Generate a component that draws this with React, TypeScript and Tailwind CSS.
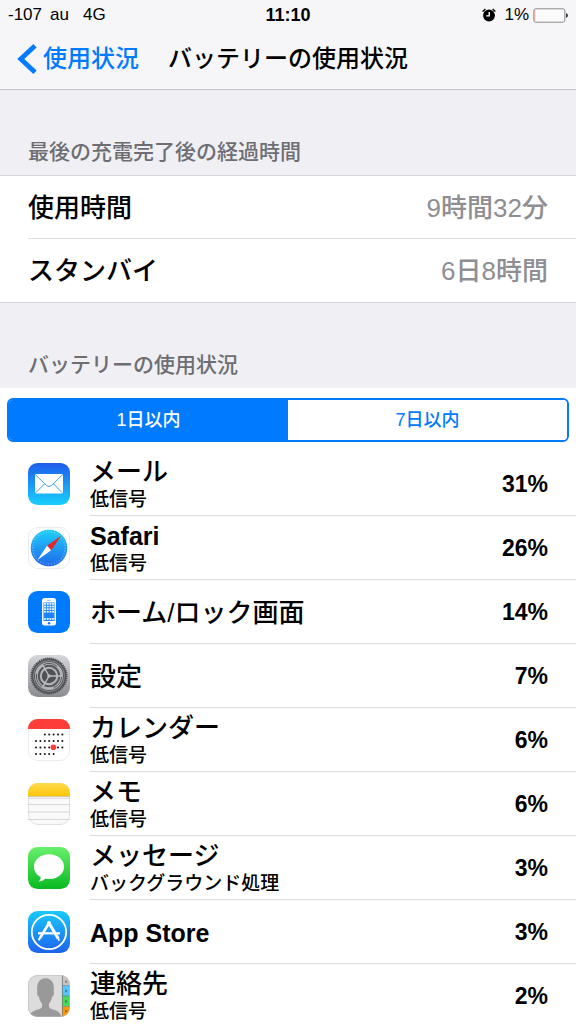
import { useState } from "react";
import type { ReactNode } from "react";

interface UsageTime {
  label: string;
  value: string;
}

interface AppUsage {
  name: string;
  latin?: boolean;
  note?: string;
  percent: number;
  icon: ReactNode;
}

const MailIcon = () => (
  <svg viewBox="0 0 42 42" className="size-full" aria-hidden="true">
    <defs>
      <linearGradient id="mail" x1="0" y1="0" x2="0" y2="1">
        <stop offset="0" stopColor="#1e5cec" />
        <stop offset="1" stopColor="#19d0fd" />
      </linearGradient>
    </defs>
    <rect width="42" height="42" rx="9.5" fill="url(#mail)" />
    <rect x="7" y="11" width="28" height="19.5" rx="1.5" fill="#fff" />
    <path
      d="M7.8 12 18.5 22.5Q21 24.6 23.5 22.5L34.2 12M7.8 29.6 16.6 20.8M34.2 29.6 25.4 20.8"
      fill="none"
      stroke="#3d9fe8"
      strokeWidth="1"
    />
  </svg>
);

const SafariIcon = () => (
  <svg viewBox="0 0 42 42" className="size-full" aria-hidden="true">
    <defs>
      <linearGradient id="safari" x1="0" y1="0" x2="0" y2="1">
        <stop offset="0" stopColor="#1fcffb" />
        <stop offset="1" stopColor="#1f68ea" />
      </linearGradient>
    </defs>
    <rect x=".5" y=".5" width="41" height="41" rx="9.5" fill="#fff" stroke="#ececec" />
    <circle cx="21" cy="21" r="18.3" fill="url(#safari)" />
    <circle
      cx="21"
      cy="21"
      r="16.2"
      fill="none"
      stroke="#c4ecff"
      strokeOpacity=".6"
      strokeWidth="1.8"
      strokeDasharray=".6 2.2"
    />
    <path d="M33.2 8.8 19 18.8 23.2 23.2Z" fill="#e8252b" />
    <path d="M9.5 33 19 18.8 23.2 23.2Z" fill="#fff" />
  </svg>
);

const HomeIcon = () => (
  <svg viewBox="0 0 42 42" className="size-full" aria-hidden="true">
    <rect width="42" height="42" rx="9.5" fill="#007aff" />
    <rect x="14" y="7" width="14" height="27.5" rx="2.5" fill="#fff" />
    <rect x="15.5" y="11.5" width="11" height="18.5" fill="#1a84ff" />
    {[13, 15.6, 18.2, 20.8, 28].map((y) =>
      [17, 19.7, 22.4, 25].map((x) => (
        <rect key={`${x}-${y}`} x={x - 0.9} y={y - 0.9} width="1.8" height="1.7" fill="#fff" />
      ))
    )}
    <rect x="19" y="8.8" width="4" height="1" rx=".5" fill="#8bc0ff" />
    <circle cx="21" cy="32.3" r="1.2" fill="#007aff" />
  </svg>
);

const SettingsIcon = () => (
  <svg viewBox="0 0 42 42" className="size-full" aria-hidden="true">
    <defs>
      <linearGradient id="settings" x1="0" y1="0" x2="0" y2="1">
        <stop offset="0" stopColor="#d5d6d9" />
        <stop offset="1" stopColor="#8b8c90" />
      </linearGradient>
    </defs>
    <rect width="42" height="42" rx="9.5" fill="url(#settings)" />
    <circle cx="21" cy="21" r="17.4" fill="#56575a" />
    <circle
      cx="21"
      cy="21"
      r="17.6"
      fill="none"
      stroke="#4a4b4e"
      strokeWidth="1.8"
      strokeDasharray="1.2 .8"
    />
    <circle cx="21" cy="21" r="15.5" fill="none" stroke="#8f9093" strokeWidth=".8" />
    <circle cx="21" cy="21" r="12.6" fill="none" stroke="#b4b5b8" strokeWidth="2.8" />
    <circle
      cx="21"
      cy="21"
      r="12.6"
      fill="none"
      stroke="#56575a"
      strokeWidth="1"
      strokeDasharray="15 11.4"
    />
    <circle cx="21" cy="21" r="8.2" fill="#505154" stroke="#b4b5b8" strokeWidth="2" />
    <path
      d="M21 21H34M21 21 14.5 9.7M21 21 14.5 32.3"
      stroke="#bcbdc0"
      strokeWidth="1.4"
      fill="none"
    />
    <circle cx="21" cy="21" r="1.8" fill="#bcbdc0" />
  </svg>
);

// Each row of the little month grid: y position, first and last column
const calendarRows = [
  [15.5, 2, 6],
  [22, 0, 6],
  [28.5, 0, 6],
  [35, 0, 4],
];

const CalendarIcon = () => (
  <svg viewBox="0 0 42 42" className="size-full" aria-hidden="true">
    <rect x=".5" y=".5" width="41" height="41" rx="9.5" fill="#fff" stroke="#ececec" />
    <path d="M0 10V9.5A9.5 9.5 0 0 1 9.5 0H32.5A9.5 9.5 0 0 1 42 9.5V10Z" fill="#fc3d39" />
    {calendarRows.map(([y, first, last]) =>
      [0, 1, 2, 3, 4, 5, 6]
        .filter((col) => col >= first && col <= last)
        .map((col) => (
          <circle key={`${y}-${col}`} cx={8 + col * 4.4} cy={y} r="1" fill="#111" />
        ))
    )}
    <circle cx="25.4" cy="28.3" r="2.8" fill="#fc3d39" />
  </svg>
);

const NotesIcon = () => (
  <svg viewBox="0 0 42 42" className="size-full" aria-hidden="true">
    <defs>
      <linearGradient id="notes" x1="0" y1="0" x2="0" y2="1">
        <stop offset="0" stopColor="#fedb4d" />
        <stop offset="1" stopColor="#fdc70a" />
      </linearGradient>
    </defs>
    <rect x=".5" y=".5" width="41" height="41" rx="9.5" fill="#f9f9f9" stroke="#e0e0e0" />
    <path d="M0 13V9.5A9.5 9.5 0 0 1 9.5 0H32.5A9.5 9.5 0 0 1 42 9.5V13Z" fill="url(#notes)" />
    <path d="M0 13.5H42" stroke="#c9b98a" strokeWidth=".8" />
    <path d="M0 15.3H42M0 21.5H42M0 29H42M0 36.5H42" stroke="#cfcfcf" strokeWidth=".8" />
  </svg>
);

const MessagesIcon = () => (
  <svg viewBox="0 0 42 42" className="size-full" aria-hidden="true">
    <defs>
      <linearGradient id="messages" x1="0" y1="0" x2="0" y2="1">
        <stop offset="0" stopColor="#69f06c" />
        <stop offset="1" stopColor="#08b921" />
      </linearGradient>
    </defs>
    <rect width="42" height="42" rx="9.5" fill="url(#messages)" />
    <path
      d="M21 7.3C12.6 7.3 5.9 12.8 5.9 19.7C5.9 24 8.6 27.8 12.7 30C12.7 31.7 12 33.2 10.8 34.4C13.3 34.3 15.5 33.3 17.2 31.7C18.4 32 19.7 32.1 21 32.1C29.4 32.1 36.1 26.6 36.1 19.7C36.1 12.8 29.4 7.3 21 7.3Z"
      fill="#fff"
    />
  </svg>
);

const AppStoreIcon = () => (
  <svg viewBox="0 0 42 42" className="size-full" aria-hidden="true">
    <defs>
      <linearGradient id="store" x1="0" y1="0" x2="0" y2="1">
        <stop offset="0" stopColor="#19c9fc" />
        <stop offset="1" stopColor="#1d62ee" />
      </linearGradient>
    </defs>
    <rect width="42" height="42" rx="9.5" fill="url(#store)" />
    <circle cx="21" cy="21" r="17.2" fill="none" stroke="#fff" strokeWidth="1.8" />
    <g stroke="#fff" fill="none">
      <path d="M20 10.5 30.2 27.5" strokeWidth="3" />
      <path d="M22 10.5 12 27" strokeWidth="2.6" />
      <path d="M10 22.3H32" strokeWidth="2.2" />
      <path d="M12.4 26.2 10.6 29.3" strokeWidth="2" />
      <path d="M30 27 31.2 29.6" strokeWidth="1.8" />
    </g>
  </svg>
);

const ContactsIcon = () => (
  <svg viewBox="0 0 42 42" className="size-full" aria-hidden="true">
    <defs>
      <clipPath id="contacts">
        <rect width="42" height="42" rx="9.5" />
      </clipPath>
    </defs>
    <g clipPath="url(#contacts)">
      <rect width="34" height="42" fill="#dcdcdc" />
      <path
        d="M1 42C2 36.5 7 35.5 11.5 34C14 33 14.5 31.5 14 28.5C12.5 27 11.5 25 11 22C9.3 21 8.7 18.5 9.3 16.5C8.3 8 11.5 3.2 17.5 3.2C23.5 3.2 26.7 8 25.7 16.5C26.3 18.5 25.7 21 24 22C23.5 25 22.5 27 21 28.5C20.5 31.5 21 33 23.5 34C28 35.5 32.5 36.5 33.5 42Z"
        fill="#999"
      />
      <rect x="34" width="8" height="10.5" fill="#c9c5c1" />
      <rect x="34" y="10.5" width="8" height="10.5" fill="#54c7fc" />
      <rect x="34" y="21" width="8" height="10.5" fill="#44db5e" />
      <rect x="34" y="31.5" width="8" height="10.5" fill="#ff9500" />
      <path d="M34.4 0V42" stroke="#777" strokeWidth=".8" />
      <path d="M34 10.5H42M34 21H42M34 31.5H42" stroke="#666" strokeWidth=".5" />
      <g fill="#000" fillOpacity=".3">
        <rect x="37" y="5.5" width="2.2" height="2.4" />
        <rect x="37" y="14.8" width="2.2" height="2.4" />
        <rect x="37" y="25.3" width="2.2" height="2.4" />
        <rect x="37" y="35" width="2.2" height="2.4" />
      </g>
    </g>
    <rect x=".4" y=".4" width="41.2" height="41.2" rx="9.2" fill="none" stroke="#bbb" strokeWidth=".6" />
  </svg>
);

const times: UsageTime[] = [
  { label: "使用時間", value: "9時間32分" },
  { label: "スタンバイ", value: "6日8時間" },
];

const apps: AppUsage[] = [
  { name: "メール", note: "低信号", percent: 31, icon: <MailIcon /> },
  { name: "Safari", latin: true, note: "低信号", percent: 26, icon: <SafariIcon /> },
  { name: "ホーム/ロック画面", percent: 14, icon: <HomeIcon /> },
  { name: "設定", percent: 7, icon: <SettingsIcon /> },
  { name: "カレンダー", note: "低信号", percent: 6, icon: <CalendarIcon /> },
  { name: "メモ", note: "低信号", percent: 6, icon: <NotesIcon /> },
  { name: "メッセージ", note: "バックグラウンド処理", percent: 3, icon: <MessagesIcon /> },
  { name: "App Store", latin: true, percent: 3, icon: <AppStoreIcon /> },
  { name: "連絡先", note: "低信号", percent: 2, icon: <ContactsIcon /> },
];

const periods = ["1日以内", "7日以内"];

const StatusBar = () => (
  <div className="grid h-[30px] grid-cols-[1fr_auto_1fr] items-center px-2 text-[17px]">
    <div className="flex">
      <span>-107</span>
      <span className="ml-2">au</span>
      <span className="ml-3.5">4G</span>
    </div>
    <span className="text-lg font-bold">11:10</span>
    <div className="flex items-center justify-end">
      <svg viewBox="0 0 14 14" className="mr-2 size-3.5" aria-hidden="true">
        <circle cx="7" cy="7.5" r="5.9" />
        <path d="M.6 3.4 3.4.9M13.4 3.4 10.6.9" stroke="#000" strokeWidth="1.3" />
        <path d="M7.2 4V7.9H4.2" fill="none" stroke="#fff" strokeWidth="1.4" />
      </svg>
      <span className="mr-1">1%</span>
      <svg viewBox="0 0 35 15" className="h-[15px] w-[35px]" aria-hidden="true">
        <rect x=".8" y=".8" width="31" height="13.4" rx="2" fill="#fbfbfb" stroke="#8a8a8a" />
        <path d="M1.8 2V13" stroke="#e5a59c" strokeWidth="1" />
        <path d="M33 5A2.6 2.6 0 0 1 33 10Z" fill="#333" />
      </svg>
    </div>
  </div>
);

const NavBar = () => (
  <nav className="grid h-14 grid-cols-[1fr_auto_1fr] items-center pt-0.5 text-2xl font-medium">
    <a href="#usage" className="flex items-center gap-1.5 pl-[17px] text-[#007aff]">
      <svg viewBox="0 0 20 30" className="h-[30px] w-5" aria-hidden="true">
        <path d="M18 1.8 3.8 15 18 28.2" fill="none" stroke="currentColor" strokeWidth="4.8" />
      </svg>
      使用状況
    </a>
    <h1>バッテリーの使用状況</h1>
  </nav>
);

const SectionTitle = ({ children }: { children: ReactNode }) => (
  <h2 className="flex h-[85px] items-end pb-[7px] pl-7 text-[21px] leading-8 font-medium text-[#6d6d72]">
    {children}
  </h2>
);

const AppRow = ({ app }: { app: AppUsage }) => (
  <li className="flex h-16 items-center gap-5 pl-7">
    <div className="size-[42px] shrink-0">{app.icon}</div>
    <div className="flex h-full grow items-center justify-between border-b border-[#dcdcde] pt-0.5 pr-7">
      <div>
        <p
          className={`leading-[30px] ${
            app.latin ? "text-[25px] font-bold" : "text-[26px] font-medium"
          }`}
        >
          {app.name}
        </p>
        {app.note && <p className="text-[19px] leading-[26px] font-medium">{app.note}</p>}
      </div>
      <span className="text-[23px] font-bold">{app.percent}%</span>
    </div>
  </li>
);

const App = () => {
  const [period, setPeriod] = useState(periods[0]);

  return (
    <div
      lang="ja"
      className="h-screen overflow-hidden bg-[#efeff4] font-['Liberation_Sans','Noto_Sans_CJK_JP',sans-serif] text-black"
    >
      <header className="border-b border-[#c4c4c8] bg-[#f6f6f8] pb-[3px]">
        <StatusBar />
        <NavBar />
      </header>
      <main>
        <SectionTitle>最後の充電完了後の経過時間</SectionTitle>
        <dl className="border-y border-[#d6d6da] bg-white text-[26px] font-medium">
          {times.map((time) => (
            <div key={time.label} className="pl-7 not-last:*:border-b">
              <div className="flex h-[63px] items-center justify-between border-[#dcdcde] pt-0.5 pr-7">
                <dt>{time.label}</dt>
                <dd className="text-[#8e8e93]">{time.value}</dd>
              </div>
            </div>
          ))}
        </dl>
        <SectionTitle>バッテリーの使用状況</SectionTitle>
        <section className="bg-white pt-2.5">
          <div className="mx-[7px] flex h-11 overflow-hidden rounded-md border-2 border-[#007aff]">
            {periods.map((item) => (
              <button
                key={item}
                type="button"
                aria-pressed={item === period}
                onClick={() => setPeriod(item)}
                className={`flex-1 text-lg font-medium ${
                  item === period ? "bg-[#007aff] text-white" : "bg-white text-[#007aff]"
                }`}
              >
                {item}
              </button>
            ))}
          </div>
          <ul className="pt-2.5">
            {apps.map((app) => (
              <AppRow key={app.name} app={app} />
            ))}
          </ul>
        </section>
      </main>
    </div>
  );
};

export default App;
